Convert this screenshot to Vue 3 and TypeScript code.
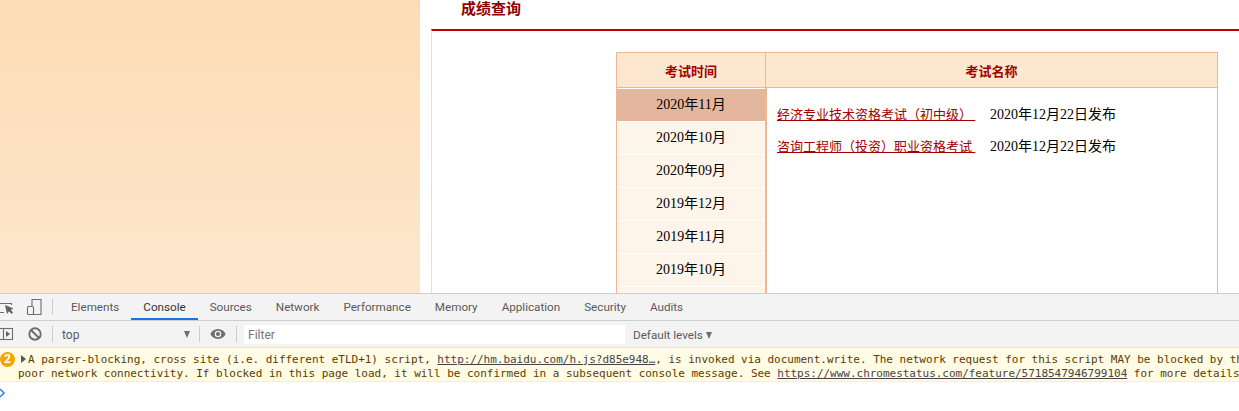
<script setup lang="ts">
const months: string[] = ['2020年11月', '2020年10月', '2020年09月', '2019年12月', '2019年11月', '2019年10月', '']
const exams = [
  { name: '经济专业技术资格考试（初中级） ', date: '2020年12月22日发布' },
  { name: '咨询工程师（投资）职业资格考试 ', date: '2020年12月22日发布' },
]
const tabs: string[] = ['Elements', 'Console', 'Sources', 'Network', 'Performance', 'Memory', 'Application', 'Security', 'Audits']
</script>

<template>
  <div class="screen">
    <div class="page">
      <aside class="side"></aside>
      <main class="main">
        <h1 class="title">成绩查询</h1>
        <div class="panel">
          <div class="table">
            <div class="thead">
              <div class="th th-time">考试时间</div>
              <div class="th th-name">考试名称</div>
            </div>
            <div class="tbody">
              <ul class="months">
                <li v-for="(m, i) in months" :key="i" class="month" :class="{ active: i === 0 }">{{ m }}</li>
              </ul>
              <div class="list">
                <div v-for="e in exams" :key="e.name" class="exam">
                  <a class="link" href="#" @click.prevent>{{ e.name }}</a>
                  <span class="date">{{ e.date }}</span>
                </div>
              </div>
            </div>
          </div>
        </div>
      </main>
    </div>

    <section class="devtools">
      <div class="tabbar">
        <div class="icons icons-top">
          <svg class="ic" width="14" height="16" viewBox="0 0 14 16">
            <path d="M11.500 6V4.500H-1M-1 13.500H4" fill="none" stroke="#6e6e6e" stroke-width="1.200" />
            <path d="M5 6L13.500 9.500L10.800 10.800L13 13.500L11.500 15L9.200 12.200L7 15Z" fill="#5f6368" />
          </svg>
          <svg class="ic device" width="16" height="16" viewBox="0 0 16 16">
            <path d="M6 7V.5H15V15.500H7" fill="none" stroke="#6e6e6e" stroke-width="1.100" />
            <rect x="1.500" y="7.500" width="6" height="8" rx="1" fill="none" stroke="#6e6e6e" stroke-width="1.100" />
          </svg>
        </div>
        <span class="sep sep-tab"></span>
        <div class="tabs">
          <div v-for="t in tabs" :key="t" class="tab" :class="{ on: t === 'Console' }">{{ t }}</div>
        </div>
      </div>

      <div class="toolbar">
        <div class="icons icons-bottom">
          <svg class="ic" width="14" height="14" viewBox="0 0 14 14">
            <rect x="-1" y="1.500" width="13.500" height="11" fill="none" stroke="#6e6e6e" stroke-width="1.100" />
            <path d="M3.500 1.500V12.500" stroke="#6e6e6e" stroke-width="1.100" />
            <path d="M6 4L10 7L6 10Z" fill="#5f6368" />
          </svg>
          <svg class="ic stop" width="14" height="14" viewBox="0 0 14 14">
            <circle cx="7" cy="7" r="5.700" fill="none" stroke="#6e6e6e" stroke-width="1.900" />
            <path d="M3 3L11 11" stroke="#6e6e6e" stroke-width="1.900" />
          </svg>
        </div>
        <span class="sep sep-a"></span>
        <div class="context">
          <span>top</span>
          <i class="arrow"></i>
        </div>
        <span class="sep sep-b"></span>
        <svg class="eye" width="16" height="12" viewBox="0 0 16 12">
          <path d="M8 1C4.400 1 1.600 3.200 .4 6C1.600 8.800 4.400 11 8 11S14.400 8.800 15.600 6C14.400 3.200 11.600 1 8 1Z" fill="#6e6e6e" />
          <circle cx="8" cy="6" r="3.300" fill="#f3f3f3" />
          <circle cx="8" cy="6" r="2" fill="#6e6e6e" />
        </svg>
        <span class="sep sep-c"></span>
        <div class="filter">Filter</div>
        <div class="levels">Default levels <i class="arrow small"></i></div>
      </div>

      <div class="msg">
        <span class="badge">2</span>
        <div class="msg-text">
          <div class="line"><i class="tri"></i>A parser-blocking, cross site (i.e. different eTLD+1) script, <u class="url">http://hm.baidu.com/h.js?d85e948…</u>, is invoked via document.write. The network request for this script MAY be blocked by the browser in this page load due to</div>
          <div class="line">poor network connectivity. If blocked in this page load, it will be confirmed in a subsequent console message. See <u class="url">https://www.chromestatus.com/feature/5718547946799104</u> for more details.</div>
        </div>
      </div>

      <div class="prompt">
        <svg width="8" height="10" viewBox="0 0 8 10">
          <path d="M0 1L4 5L0 9" fill="none" stroke="#367cf1" stroke-width="1.500" />
        </svg>
      </div>
    </section>
  </div>
</template>

<style>
html, body { margin: 0; background: #fff; overflow: hidden; }
</style>

<style scoped>
.screen {
  width: 1239px;
  height: 411px;
  display: flex;
  flex-direction: column;
  overflow: hidden;
  background: #fff;
  font-family: "Liberation Serif", "Noto Sans CJK SC", serif;
}
.page {
  height: 293px;
  flex: none;
  display: flex;
  overflow: hidden;
}
.side {
  width: 420px;
  flex: none;
  background: linear-gradient(180deg, #fddcb5 0%, #fde7cd 100%);
}
.main {
  flex: 1;
  margin-left: 11px;
  display: flex;
  flex-direction: column;
  min-width: 0;
  overflow: hidden;
}
.title {
  margin: 0;
  flex: none;
  height: 29px;
  box-sizing: border-box;
  padding-left: 30px;
  font-size: 15px;
  line-height: 19px;
  font-weight: bold;
  color: #8f0000;
}
.panel {
  flex: none;
  border-top: 2px solid #c00000;
  border-left: 1px solid #f6dcc6;
  padding: 21px 21px 0 184px;
}
.table {
  border: 1px solid #efb78f;
  border-bottom: 0;
}
.thead { display: flex; height: 34px; border-bottom: 1px solid #efb78f; }
.th {
  display: flex;
  align-items: center;
  justify-content: center;
  background: #fde8cf;
  color: #a00000;
  font-size: 13px;
  font-weight: bold;
}
.th-time { width: 148px; border-right: 1px solid #efb78f; }
.th-name { flex: 1; }
.tbody { display: flex; }
.months {
  list-style: none;
  margin: 0;
  padding: 1px 0 0;
  width: 148px;
  border-right: 2px solid #efb78f;
}
.month {
  height: 32px;
  line-height: 32px;
  margin-bottom: 1px;
  background: #fdf4ea;
  text-align: center;
  font-size: 14px;
  color: #000;
}
.month.active { background: #e2b79e; }
.list { padding-top: 9px; padding-left: 10px; }
.exam {
  height: 32px;
  display: flex;
  align-items: center;
  font-size: 14px;
  color: #000;
}
.link {
  width: 199px;
  font-size: 13px;
  color: #a00000;
  white-space: pre;
  text-decoration: underline;
  text-underline-offset: 1px;
}
.date { margin-left: 14px; }

.devtools {
  flex: 1;
  display: flex;
  flex-direction: column;
  font-family: Roboto, "Open Sans", sans-serif;
  border-top: 1px solid #cdcdcd;
}
.tabbar, .toolbar {
  display: flex;
  align-items: center;
  background: #f3f3f3;
  height: 26px;
  flex: none;
}
.tabbar { border-bottom: 1px solid #cdcdcd; }
.icons { display: flex; align-items: center; width: 52px; flex: none; }
.ic { flex: none; display: block; }
.device { margin-left: 12px; }
.stop { margin-left: 14px; }
.sep { width: 1px; height: 16px; background: #ccc; flex: none; }
.tabs { display: flex; height: 26px; margin-left: 6px; }
.tab {
  padding: 1px 12px 0;
  line-height: 25px;
  font-size: 11.660px;
  color: #5a5a5a;
  box-sizing: border-box;
  white-space: nowrap;
}
.tab.on { color: #333; border-bottom: 2px solid #1a73e8; }
.context {
  width: 146px;
  flex: none;
  box-sizing: border-box;
  padding: 1px 9px 0;
  display: flex;
  align-items: center;
  justify-content: space-between;
  font-size: 12px;
  color: #5a5a5a;
}
.arrow {
  display: inline-block;
  width: 0;
  height: 0;
  border-left: 3.500px solid transparent;
  border-right: 3.500px solid transparent;
  border-top: 7px solid #6e6e6e;
}
.eye { margin: 0 10px; flex: none; }
.filter {
  margin: 1px 0 0 7px;
  flex: none;
  width: 381px;
  height: 19px;
  line-height: 20px;
  box-sizing: border-box;
  padding-left: 4px;
  background: #fff;
  font-size: 12px;
  color: #757575;
}
.levels {
  margin-left: 8px;
  padding-top: 1px;
  font-size: 11.660px;
  color: #5a5a5a;
  white-space: nowrap;
}
.msg {
  height: 35px;
  flex: none;
  box-sizing: border-box;
  display: flex;
  background: #fffbe5;
  border-top: 1px solid #f5e9b8;
  border-bottom: 1px solid #f8f0cc;
  overflow: hidden;
}
.badge {
  width: 15px;
  height: 15px;
  margin-top: 4px;
  flex: none;
  border-radius: 50%;
  background: #f2a600;
  color: #fff;
  font: bold 12px/15px Roboto, sans-serif;
  text-align: center;
}
.msg-text { margin-left: 3px; min-width: 0; }
.line {
  font-family: "DejaVu Sans Mono", monospace;
  font-size: 11px;
  letter-spacing: -0.02px;
  line-height: 14px;
  color: #5c3b00;
  white-space: pre;
}
.line:first-child { margin-top: 5px; }
.url { color: #444; text-decoration: underline; }
.tri {
  display: inline-block;
  width: 0;
  height: 0;
  margin: 0 2px 0 3px;
  border-top: 4px solid transparent;
  border-bottom: 4px solid transparent;
  border-left: 5px solid #555;
}
.prompt { padding-top: 6px; height: 12px; line-height: 0; }
</style>
